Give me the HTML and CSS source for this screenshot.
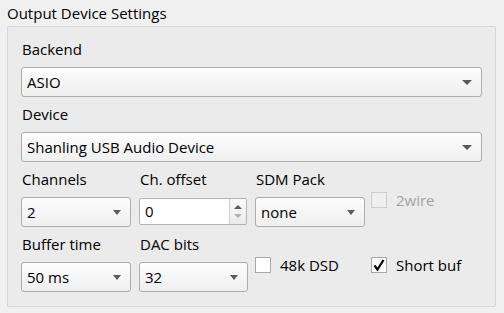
FILE: index.html
```html
<!DOCTYPE html>
<html lang="en">
<head>
  <meta charset="UTF-8" />
  <title>Output Device Settings</title>
  <link rel="stylesheet" href="styles.css">
</head>
<body>
  <div class="panel-title">Output Device Settings</div>

  <div class="group">
    <div class="label">Backend</div>
    <div class="combo wide"><span>ASIO</span><i class="arrow"></i></div>

    <div class="label">Device</div>
    <div class="combo wide"><span>Shanling USB Audio Device</span><i class="arrow"></i></div>

    <div class="grid">
      <div class="label">Channels</div>
      <div class="label">Ch. offset</div>
      <div class="label">SDM Pack</div>
      <label class="check disabled span-top">
        <span class="box"></span>2wire
      </label>

      <div class="combo w110"><span>2</span><i class="arrow"></i></div>
      <div class="spin">
        <span class="spin-value">0</span>
        <span class="spin-btns">
          <i class="up"></i>
          <i class="down"></i>
        </span>
      </div>
      <div class="combo w110"><span>none</span><i class="arrow"></i></div>

      <div class="label">Buffer time</div>
      <div class="label">DAC bits</div>
      <label class="check span-bottom col3">
        <span class="box"></span>48k DSD
      </label>
      <label class="check span-bottom col4">
        <span class="box">
          <svg width="14" height="14" viewBox="0 0 14 14"><path d="M2.5 7.5 L5.5 11.5 L11.5 2" fill="none" stroke="#000" stroke-width="2.2"/></svg>
        </span>Short buf
      </label>

      <div class="combo w110"><span>50 ms</span><i class="arrow"></i></div>
      <div class="combo w109"><span>32</span><i class="arrow"></i></div>
    </div>
  </div>
</body>
</html>
```

FILE: styles.css
```css
body {
  margin: 0;
  background-color: #f0f0f0;
  font-family: 'Open Sans', 'Noto Sans', sans-serif;
  font-size: 15px;
  color: #000;
}
.panel-title {
  padding: 3px 0 0 7px;
  line-height: 20px;
  height: 23px;
}
.group {
  margin-left: 7px;
  width: 461px;
  height: 274px;
  padding: 5px 13px 0 13px;
  border: 1px solid #d7d7d7;
  border-radius: 2px;
  background-color: #ebebeb;
}
.label {
  height: 35px;
  box-sizing: border-box;
  padding: 7px 0 0 1px;
  line-height: 20px;
}
.combo {
  height: 30px;
  box-sizing: border-box;
  border: 1px solid #adadad;
  border-radius: 3px;
  background: linear-gradient(#fdfdfd, #efefef);
  display: flex;
  align-items: center;
  justify-content: space-between;
  padding: 0 9px 0 5px;
}
.combo span {
  line-height: 20px;
}
.arrow {
  width: 0;
  height: 0;
  border-left: 5px solid transparent;
  border-right: 5px solid transparent;
  border-top: 5px solid #5a5a5a;
}
.w110 .arrow, .w109 .arrow {
  border-left-width: 4px;
  border-right-width: 4px;
}
.wide {
  width: 461px;
}
.w110 {
  width: 110px;
}
.w109 {
  width: 109px;
}
.grid {
  display: grid;
  grid-template-columns: 118px 116px 116px 1fr;
  grid-template-rows: 35px 30px 35px 30px;
}
.spin {
  width: 108px;
  height: 27px;
  margin-top: 1px;
  box-sizing: border-box;
  border: 1px solid #b4b4b4;
  border-radius: 2px;
  background-color: #fff;
  display: flex;
}
.spin-value {
  flex: 1;
  padding-left: 5px;
  line-height: 25px;
}
.spin-btns {
  width: 16px;
  border-left: 1px solid #cfcfcf;
  background: linear-gradient(#fafafa, #ececec);
  display: flex;
  flex-direction: column;
  align-items: center;
  justify-content: center;
  gap: 5px;
}
.spin-btns i {
  width: 0;
  height: 0;
  border-left: 4px solid transparent;
  border-right: 4px solid transparent;
}
.spin-btns .up {
  border-bottom: 4px solid #5a5a5a;
}
.spin-btns .down {
  border-top: 4px solid #b0b0b0;
}
.check {
  display: flex;
  align-items: center;
  gap: 9px;
  line-height: 20px;
  align-self: center;
  margin-top: 11px;
}
.check .box {
  width: 16px;
  height: 16px;
  box-sizing: border-box;
  border: 1px solid #a8a8a8;
  background-color: #fff;
  display: flex;
  align-items: center;
  justify-content: center;
}
.check.disabled {
  color: #a3a3a3;
}
.check.disabled .box {
  border-color: #cdcdcd;
  background-color: #efefef;
}
.span-top {
  grid-row: 1 / 3;
  grid-column: 4;
}
.span-bottom {
  grid-row: 3 / 5;
}
.col3 {
  grid-column: 3;
}
.col4 {
  grid-column: 4;
}
```
